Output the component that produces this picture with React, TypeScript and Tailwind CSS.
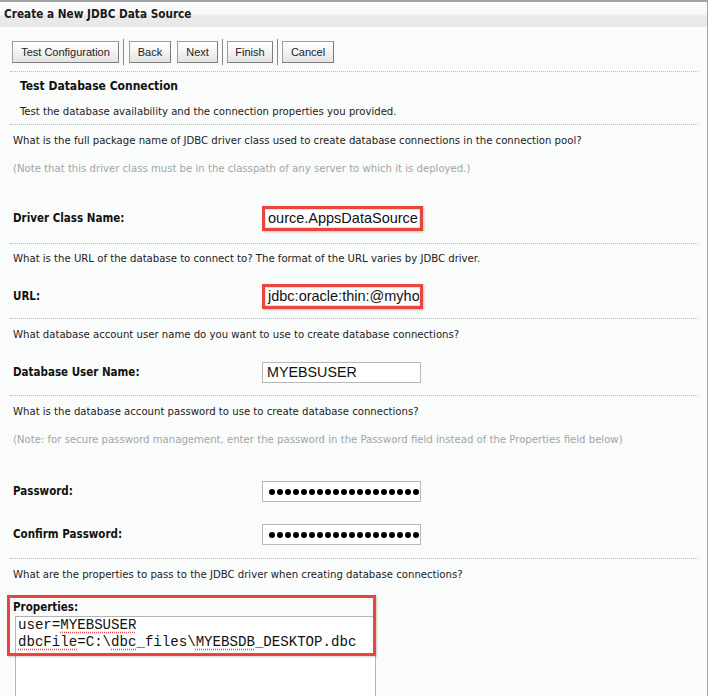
import React from "react";

const BODY = "font-['DejaVu_Sans_Condensed','DejaVu_Sans',sans-serif]";
const ARIAL = "font-['Liberation_Sans',Arial,sans-serif]";
const MONO = "font-['Liberation_Mono','Courier_New',monospace]";

function Dotted() {
  return <div className="ml-[10px] mr-[9px] border-t border-dotted border-[#b9bcbc]" />;
}

function ToolButton({ label, w }: { label: string; w: string }) {
  return (
    <button
      className={`${ARIAL} ${w} h-[22px] text-[11px] text-[#222] border border-[#9c9c9c] border-b-[#7d7d7d] border-r-[#7d7d7d] bg-[linear-gradient(to_bottom,#ffffff_0%,#f4f4f4_45%,#e3e3e3_100%)] flex items-center justify-center`}
    >
      {label}
    </button>
  );
}

function Sep() {
  return <div className="w-px h-[26px] bg-[#8a8a8a] self-center" />;
}

function Question({ text, h }: { text: string; h: string }) {
  return <div className={`${h} flex items-center pl-[13px] text-[#222]`}>{text}</div>;
}

function Note({ text }: { text: string }) {
  return <div className="h-[24px] flex items-center pl-[13px] text-[#a3a5a5]">{text}</div>;
}

function Dots() {
  return (
    <div className="w-[159px] h-[21px] bg-white border border-[#b8b8b8] overflow-hidden flex items-center pl-[6px] gap-[2px]">
      {Array.from({ length: 20 }).map((_, i) => (
        <span key={i} className="shrink-0 w-[6px] h-[6px] rounded-full bg-black" />
      ))}
    </div>
  );
}

function Field({
  label,
  h,
  pt,
  children,
}: {
  label: string;
  h: string;
  pt: string;
  children: React.ReactNode;
}) {
  return (
    <div className={`${h} ${pt} flex items-start pl-[13px]`}>
      <div className="w-[249px] h-[21px] flex items-center font-bold text-[11.5px] text-[#111]">{label}</div>
      {children}
    </div>
  );
}

function RedInput({ value }: { value: string }) {
  return (
    <div className="w-[161px] h-[25px] -mt-[2px] border-[3px] border-[#e8463d] shadow-[1px_1px_2px_rgba(0,0,0,0.25)] bg-white">
      <div
        className={`${ARIAL} w-full h-full bg-white border border-[#e2e2e2] overflow-hidden whitespace-nowrap flex items-center pl-[2px] text-[14.5px] text-[#111]`}
      >
        {value}
      </div>
    </div>
  );
}

const sp = "underline decoration-dotted decoration-[#e0504a] underline-offset-[3px]";

export default function App() {
  return (
    <div className={`${BODY} text-[11.25px] w-[710px] h-[696px] overflow-hidden bg-white`}>
      <div className="w-[708px] h-[696px] border-t-2 border-r border-t-[#9ea3a6] border-r-[#9ea3a6] bg-[#fafcfb]">
        {/* title bar */}
        <div className="h-[25px] flex items-center pl-[4px] text-[11.7px] font-bold text-[#1a1a1a] bg-[linear-gradient(to_bottom,#fdfdfd_0%,#f6f6f6_50%,#eaeaea_56%,#e8e8e8_100%)]">
          Create a New JDBC Data Source
        </div>

        {/* toolbar */}
        <div className="h-[44px] pt-[14px] pl-[12px] flex items-start">
          <ToolButton label="Test Configuration" w="w-[107px]" />
          <div className="ml-[4px] -mt-[2px]">
            <Sep />
          </div>
          <div className="ml-[5px]">
            <ToolButton label="Back" w="w-[42px]" />
          </div>
          <div className="ml-[6px]">
            <ToolButton label="Next" w="w-[41px]" />
          </div>
          <div className="ml-[4px] -mt-[2px]">
            <Sep />
          </div>
          <div className="ml-[4px]">
            <ToolButton label="Finish" w="w-[46px]" />
          </div>
          <div className="ml-[4px] -mt-[2px]">
            <Sep />
          </div>
          <div className="ml-[4px]">
            <ToolButton label="Cancel" w="w-[52px]" />
          </div>
        </div>

        <Dotted />
        <div className="h-[28px] flex items-center pl-[20px] font-bold text-[12px] text-[#111]">
          Test Database Connection
        </div>
        <div className="h-[24px] flex items-center pl-[20px] text-[#222]">
          Test the database availability and the connection properties you provided.
        </div>

        <Dotted />
        <Question
          h="h-[32px]"
          text="What is the full package name of JDBC driver class used to create database connections in the connection pool?"
        />
        <Note text="(Note that this driver class must be in the classpath of any server to which it is deployed.)" />
        <Field label="Driver Class Name:" h="h-[62px]" pt="pt-[27px]">
          <RedInput value="ource.AppsDataSource" />
        </Field>

        <Dotted />
        <Question
          h="h-[30px]"
          text="What is the URL of the database to connect to? The format of the URL varies by JDBC driver."
        />
        <Field label="URL:" h="h-[44px]" pt="pt-[12px]">
          <RedInput value="jdbc:oracle:thin:@myho" />
        </Field>

        <Dotted />
        <Question
          h="h-[32px]"
          text="What database account user name do you want to use to create database connections?"
        />
        <Field label="Database User Name:" h="h-[44px]" pt="pt-[11px]">
          <div
            className={`${ARIAL} w-[159px] h-[21px] bg-white border border-[#b8b8b8] flex items-center pl-[4px] text-[14.3px] text-[#111]`}
          >
            MYEBSUSER
          </div>
        </Field>

        <Dotted />
        <Question
          h="h-[32px]"
          text="What is the database account password to use to create database connections?"
        />
        <Note text="(Note: for secure password management, enter the password in the Password field instead of the Properties field below)" />
        <Field label="Password:" h="h-[62px]" pt="pt-[29px]">
          <Dots />
        </Field>
        <Field label="Confirm Password:" h="h-[44px]" pt="pt-[10px]">
          <Dots />
        </Field>

        <Dotted />
        <Question
          h="h-[32px]"
          text="What are the properties to pass to the JDBC driver when creating database connections?"
        />

        {/* properties */}
        <div className="relative pt-[10px]">
          <div className="pl-[13px] h-[14px] flex items-center font-bold text-[11.5px] text-[#111]">Properties:</div>
          <div
            className={`${MONO} ml-[15px] mt-[1px] w-[361px] h-[120px] bg-white border border-[#b5b5b5] pl-[2px] text-[14.1px] leading-[17px] text-[#111] whitespace-pre`}
          >
            <div>
              user=<span className={sp}>MYEBSUSER</span>
            </div>
            <div>
              <span className={sp}>dbcFile</span>=C:\<span className={sp}>dbc</span>_files\
              <span className={sp}>MYEBSDB</span>_DESKTOP.dbc
            </div>
          </div>
          <div className="absolute left-[7px] top-[4px] w-[369px] h-[61px] border-[3px] border-[#e8463d] shadow-[1px_1px_2px_rgba(0,0,0,0.2)]" />
        </div>
      </div>
    </div>
  );
}
